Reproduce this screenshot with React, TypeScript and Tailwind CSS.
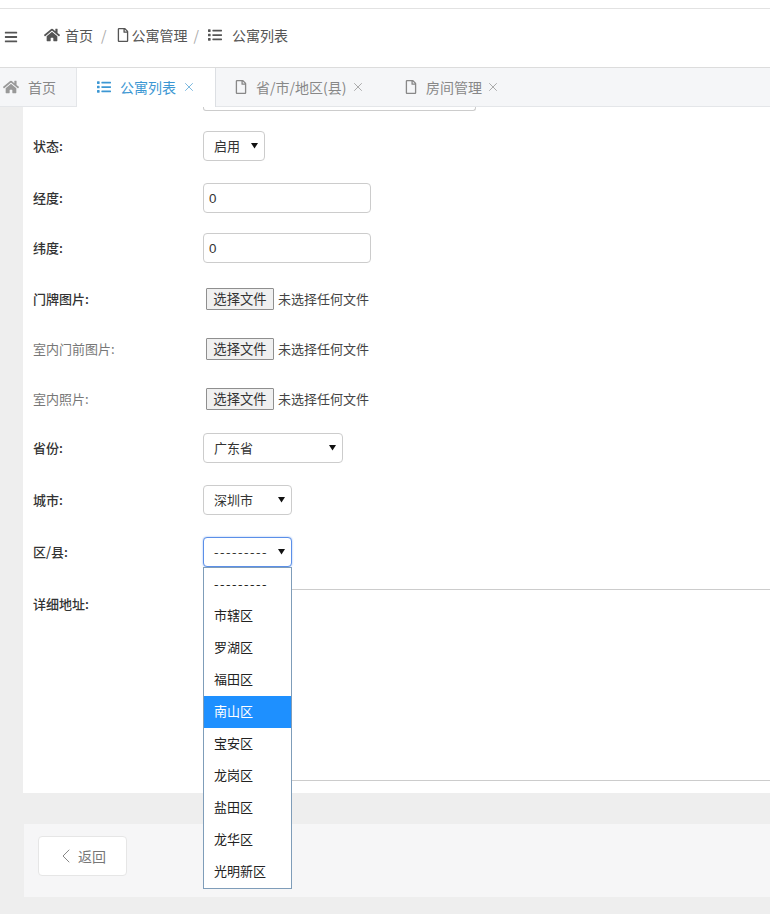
import { useState, type ReactNode } from "react";
import { ChevronLeft, X } from "lucide-react";
import { FaBars, FaHome, FaList, FaRegFile } from "react-icons/fa";

const districts = ["---------", "市辖区", "罗湖区", "福田区", "南山区", "宝安区", "龙岗区", "盐田区", "龙华区", "光明新区"];

function Arrow() {
  return (
    <svg width="7" height="7" viewBox="0 0 7 7" className="mb-[2px] shrink-0">
      <path d="M0 1h7L3.5 6.5z" fill="#111" />
    </svg>
  );
}

function Label({ text, strong = true }: { text: string; strong?: boolean }) {
  return (
    <label className={`block w-[170px] shrink-0 text-[13px] leading-[30px] ${strong ? "font-medium text-[#333]" : "text-[#777]"}`}>
      {text}
    </label>
  );
}

function Row({ className = "", children }: { className?: string; children: ReactNode }) {
  return <div className={`flex h-[30px] items-center ${className}`}>{children}</div>;
}

function FakeSelect({ value, className, open }: { value: string; className: string; open?: boolean }) {
  return (
    <div className={`relative flex h-[30px] items-center justify-between rounded-[4px] border bg-white pl-[10px] pr-[6px] text-[13px] text-[#333] ${open ? "border-[#5b8fe8] shadow-[0_0_2px_#8fb4f0]" : "border-[#ccc]"} ${className}`}>
      <span className={value.startsWith("-") ? "tracking-[1.5px]" : ""}>{value}</span>
      <Arrow />
      {open && (
        <ul className="absolute left-[-1px] top-[29px] z-10 w-[89px] border border-[#7f9db9] bg-white text-[13px] text-[#222]">
          {districts.map((d) => (
            <li
              key={d}
              className={`h-[32px] pl-[10px] ${d === "南山区" ? "bg-[#1e90ff] text-white" : ""} ${d.startsWith("-") ? "leading-[32px] tracking-[1.5px]" : "leading-[30px]"}`}
            >
              {d}
            </li>
          ))}
        </ul>
      )}
    </div>
  );
}

function FileField() {
  return (
    <div className="flex items-center pl-[3px] text-[13px] text-[#444]">
      <button className="h-[22px] w-[68px] rounded-[1px] border border-[#8f8f8f] bg-[#f0f0f0] text-[13.33px] leading-none text-[#333]">选择文件</button>
      <span className="ml-[4px]">未选择任何文件</span>
    </div>
  );
}

function TabClose({ className = "ml-[4.5px] text-[#999]" }: { className?: string }) {
  return <X size={14} strokeWidth={1.4} className={className} />;
}

export default function App() {
  const [lng, setLng] = useState("0");
  const [lat, setLat] = useState("0");

  return (
    <div className="h-[914px] w-[770px] overflow-hidden bg-[#eeeeee] font-['Microsoft_YaHei','Noto_Sans_CJK_SC','Liberation_Sans',sans-serif]">
      <div className="h-[9px] border-b border-[#e2e2e2] bg-white" />

      <header className="flex h-[59px] items-center border-b border-[#dcdcdc] bg-white pb-[6px] text-[14px] text-[#555]">
        <FaBars size={14} className="ml-[4px] mt-[4px] text-[#555]" />
        <FaHome size={16} className="ml-[26px] text-[#555]" />
        <span className="ml-[5px]">首页</span>
        <span className="ml-[8px] text-[#aaa]">/</span>
        <FaRegFile size={14} className="ml-[9px]" />
        <span className="ml-[2px]">公寓管理</span>
        <span className="ml-[6px] text-[#aaa]">/</span>
        <FaList size={14} className="ml-[9px]" />
        <span className="ml-[10px]">公寓列表</span>
      </header>

      <nav className="flex h-[39px] items-center border-b border-[#e4e6e9] bg-[#f5f6f8] text-[14px] text-[#888]">
        <div className="flex h-full w-[77px] items-center border-r border-[#e4e6e9] pl-[3px]">
          <FaHome size={16} className="text-[#999]" />
          <span className="ml-[9px]">首页</span>
        </div>
        <div className="relative flex h-[39px] w-[139px] items-center border-r border-[#dcdfe3] bg-white pl-[20px] text-[#3c97d3]">
          <FaList size={14} />
          <span className="ml-[9px]">公寓列表</span>
          <TabClose className="ml-[5.5px] text-[#5fa8d8]" />
        </div>
        <div className="flex h-full items-center pl-[18px]">
          <FaRegFile size={14} className="text-[#888]" />
          <span className="ml-[8px]">省/市/地区(县)</span>
          <TabClose />
        </div>
        <div className="flex h-full items-center pl-[39px]">
          <FaRegFile size={14} className="text-[#888]" />
          <span className="ml-[8px]">房间管理</span>
          <TabClose />
        </div>
      </nav>

      <main className="ml-[23px] w-[747px] bg-white pb-[12px] pl-[10px]">
        <div className="ml-[170px] h-[4px] w-[273px] rounded-b-[3px] border-x border-b border-[#ccc]" />

        <Row className="mt-[20px]">
          <Label text="状态:" />
          <FakeSelect value="启用" className="w-[62px]" />
        </Row>
        <Row className="mt-[22px]">
          <Label text="经度:" />
          <input
            value={lng}
            onChange={(e) => setLng(e.target.value)}
            className="h-[30px] w-[168px] rounded-[4px] border border-[#ccc] px-[5px] font-['Liberation_Sans',sans-serif] text-[13.33px] text-[#333]"
          />
        </Row>
        <Row className="mt-[20px]">
          <Label text="纬度:" />
          <input
            value={lat}
            onChange={(e) => setLat(e.target.value)}
            className="h-[30px] w-[168px] rounded-[4px] border border-[#ccc] px-[5px] font-['Liberation_Sans',sans-serif] text-[13.33px] text-[#333]"
          />
        </Row>
        <Row className="mt-[21px]">
          <Label text="门牌图片:" />
          <FileField />
        </Row>
        <Row className="mt-[20px]">
          <Label text="室内门前图片:" strong={false} />
          <FileField />
        </Row>
        <Row className="mt-[20px]">
          <Label text="室内照片:" strong={false} />
          <FileField />
        </Row>
        <Row className="mt-[19px]">
          <Label text="省份:" />
          <FakeSelect value="广东省" className="w-[140px]" />
        </Row>
        <Row className="mt-[22px]">
          <Label text="城市:" />
          <FakeSelect value="深圳市" className="w-[89px]" />
        </Row>
        <Row className="mt-[22px]">
          <Label text="区/县:" />
          <FakeSelect value="---------" className="w-[89px]" open />
        </Row>
        <div className="mt-[22px] flex items-start">
          <Label text="详细地址:" />
          <div className="h-[192px] w-[600px] shrink-0 rounded-[4px] border border-[#ccc] bg-white" />
        </div>
      </main>

      <footer className="ml-[24px] mt-[31px] flex h-[73px] w-[746px] items-start bg-[#f6f6f7] pl-[14px] pt-[12px]">
        <button className="flex h-[40px] w-[89px] items-center rounded-[4px] border border-[#e6e6e6] bg-white pl-[15px] text-[14px] text-[#777]">
          <ChevronLeft size={24} strokeWidth={1} className="text-[#888]" />
          返回
        </button>
      </footer>
    </div>
  );
}
